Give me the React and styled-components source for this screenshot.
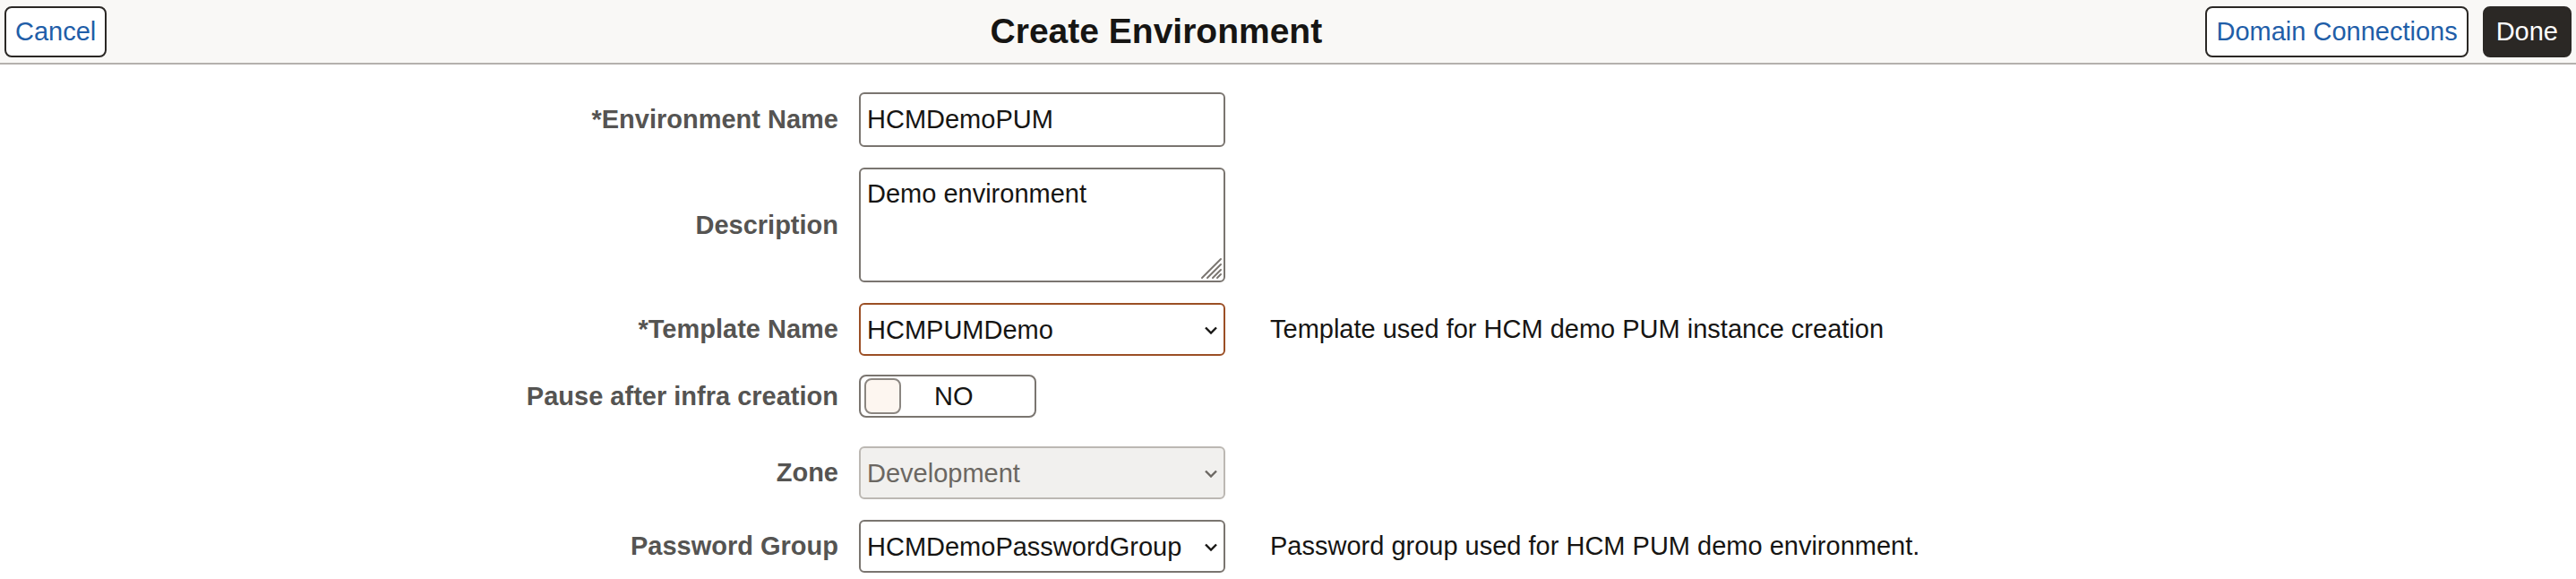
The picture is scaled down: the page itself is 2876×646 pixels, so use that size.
import React from 'react';
import styled, { createGlobalStyle } from 'styled-components';

const GlobalStyle = createGlobalStyle`
  html, body {
    margin: 0;
    padding: 0;
    background: #ffffff;
  }
  body {
    font-family: "Liberation Sans", Arial, sans-serif;
    color: #161513;
  }
`;

const Page = styled.div`
  width: 2876px;
  height: 646px;
  overflow: hidden;
`;

const Header = styled.header`
  display: flex;
  align-items: center;
  height: 72px;
  padding: 0 5px;
  box-sizing: border-box;
  background: #f9f8f6;
  border-bottom: 2px solid #b4b1ad;
`;

const HeaderGroup = styled.div`
  display: flex;
  align-items: center;
  gap: 16px;
`;

const Title = styled.h1`
  flex: 1;
  margin: 0;
  text-align: center;
  font-size: 39px;
  font-weight: 700;
  color: #161513;
`;

const HeaderButton = styled.button`
  height: 57px;
  padding: 0 ${p => (p.primary ? '13px' : '10px')};
  font-family: "Liberation Sans", Arial, sans-serif;
  font-size: 29px;
  border-radius: 8px;
  border: 2px solid #2b2825;
  background: ${p => (p.primary ? '#2b2825' : '#ffffff')};
  color: ${p => (p.primary ? '#ffffff' : '#1f5ea8')};
  cursor: pointer;
`;

const Form = styled.div`
  display: flex;
  flex-direction: column;
  gap: 23px;
  padding-top: 31px;
`;

const Row = styled.div`
  display: flex;
  align-items: ${p => (p.top ? 'flex-start' : 'center')};
  min-height: ${p => p.minHeight || 0}px;
`;

const Label = styled.label`
  width: 959px;
  flex: none;
  padding-right: 23px;
  box-sizing: border-box;
  text-align: right;
  font-size: 29px;
  font-weight: 700;
  color: #555452;
  line-height: ${p => (p.lh ? `${p.lh}px` : 'normal')};
`;

const Control = styled.div`
  position: relative;
  width: 409px;
  flex: none;
`;

const TextInput = styled.input`
  width: 100%;
  height: 61px;
  box-sizing: border-box;
  padding: 0 7px;
  border: 2px solid #7a7570;
  border-radius: 6px;
  font-family: "Liberation Sans", Arial, sans-serif;
  font-size: 29px;
  color: #161513;
  background: #ffffff;
  outline: none;
`;

const TextArea = styled.textarea`
  display: block;
  width: 100%;
  height: 128px;
  box-sizing: border-box;
  padding: 10px 7px;
  border: 2px solid #7a7570;
  border-radius: 6px;
  font-family: "Liberation Sans", Arial, sans-serif;
  font-size: 29px;
  line-height: 1.2;
  color: #161513;
  resize: none;
  outline: none;
`;

const Grip = styled.svg`
  position: absolute;
  right: 3px;
  bottom: 3px;
  pointer-events: none;
`;

const Select = styled.select`
  width: 100%;
  height: 59px;
  box-sizing: border-box;
  padding: 0 36px 0 7px;
  appearance: none;
  -webkit-appearance: none;
  border: 2px solid ${p => p.border || '#7a7570'};
  border-radius: 6px;
  font-family: "Liberation Sans", Arial, sans-serif;
  font-size: 29px;
  color: ${p => (p.disabled ? '#6b6762' : '#161513')};
  background: ${p => (p.disabled ? '#f1f0ee' : '#ffffff')};
  opacity: 1;
  outline: none;
`;

const Chevron = styled.svg`
  position: absolute;
  right: 8px;
  top: 50%;
  margin-top: -4px;
  pointer-events: none;
`;

const Help = styled.span`
  margin-left: 50px;
  font-size: 29px;
  color: #161513;
`;

const Toggle = styled.div`
  display: flex;
  align-items: center;
  gap: 37px;
  width: 198px;
  height: 48px;
  margin-top: -2px;
  box-sizing: border-box;
  padding: 0 4px;
  border: 2px solid #7a7570;
  border-radius: 8px;
  background: #ffffff;
`;

const Knob = styled.span`
  width: 41px;
  height: 40px;
  box-sizing: border-box;
  border: 2px solid #8b8681;
  border-radius: 8px;
  background: #fdf6f0;
`;

const ToggleText = styled.span`
  font-size: 29px;
  color: #161513;
`;

const ChevronIcon = ({ color = '#161513' }) => (
  <Chevron width="16" height="9" viewBox="0 0 16 9">
    <path d="M2 1.5 L8 7.5 L14 1.5" fill="none" stroke={color} strokeWidth="2.4" />
  </Chevron>
);

const SelectField = ({ value, border, disabled, chevron }) => (
  <Control>
    <Select defaultValue={value} border={border} disabled={disabled}>
      <option value={value}>{value}</option>
    </Select>
    <ChevronIcon color={chevron} />
  </Control>
);

const App = () => (
  <Page>
    <GlobalStyle />
    <Header>
      <HeaderGroup>
        <HeaderButton>Cancel</HeaderButton>
      </HeaderGroup>
      <Title>Create Environment</Title>
      <HeaderGroup>
        <HeaderButton>Domain Connections</HeaderButton>
        <HeaderButton primary>Done</HeaderButton>
      </HeaderGroup>
    </Header>

    <Form>
      <Row>
        <Label>*Environment Name</Label>
        <Control>
          <TextInput defaultValue="HCMDemoPUM" />
        </Control>
      </Row>

      <Row>
        <Label>Description</Label>
        <Control>
          <TextArea defaultValue="Demo environment" />
          <Grip width="26" height="26" viewBox="0 0 26 26">
            <g stroke="#7a7570" strokeWidth="2" strokeLinecap="round">
              <line x1="24" y1="3" x2="3" y2="24" />
              <line x1="24" y1="9" x2="9" y2="24" />
              <line x1="24" y1="15" x2="15" y2="24" />
              <line x1="24" y1="20" x2="20" y2="24" />
            </g>
          </Grip>
        </Control>
      </Row>

      <Row>
        <Label>*Template Name</Label>
        <SelectField value="HCMPUMDemo" border="#9b4f25" />
        <Help>Template used for HCM demo PUM instance creation</Help>
      </Row>

      <Row top minHeight={55}>
        <Label lh={44}>Pause after infra creation</Label>
        <Toggle>
          <Knob />
          <ToggleText>NO</ToggleText>
        </Toggle>
      </Row>

      <Row>
        <Label>Zone</Label>
        <SelectField value="Development" border="#bcb8b3" disabled chevron="#6b6762" />
      </Row>

      <Row>
        <Label>Password Group</Label>
        <SelectField value="HCMDemoPasswordGroup" />
        <Help>Password group used for HCM PUM demo environment.</Help>
      </Row>
    </Form>
  </Page>
);

export default App;
